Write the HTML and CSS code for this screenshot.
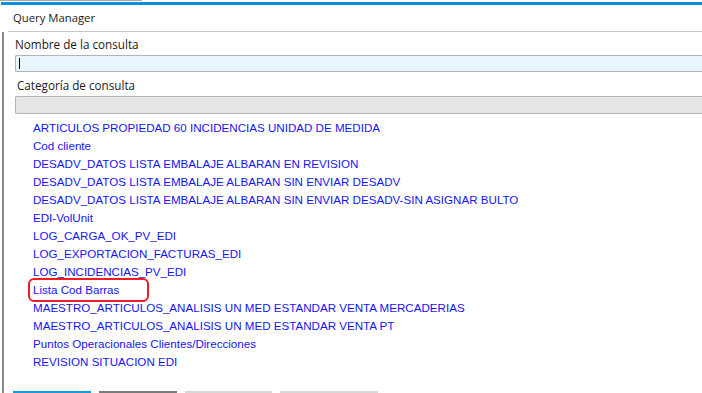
FILE: index.html
```html
<!DOCTYPE html>
<html lang="es">
<head>
  <meta charset="UTF-8" />
  <title>Query Manager</title>
  <link rel="stylesheet" href="styles.css">
</head>
<body>
  <div class="window">
    <div class="strip"></div>
    <div class="accent"></div>
    <header class="titlebar">Query Manager</header>

    <main class="content">
      <label class="label">Nombre de la consulta</label>
      <div class="field name"><span class="caret"></span></div>

      <label class="label cat">Categoría de consulta</label>
      <div class="field category"></div>

      <ul class="queries">
        <li>ARTICULOS PROPIEDAD 60 INCIDENCIAS UNIDAD DE MEDIDA</li>
        <li>Cod cliente</li>
        <li>DESADV_DATOS LISTA EMBALAJE ALBARAN EN REVISION</li>
        <li>DESADV_DATOS LISTA EMBALAJE ALBARAN SIN ENVIAR DESADV</li>
        <li>DESADV_DATOS LISTA EMBALAJE ALBARAN SIN ENVIAR DESADV-SIN ASIGNAR BULTO</li>
        <li>EDI-VolUnit</li>
        <li>LOG_CARGA_OK_PV_EDI</li>
        <li>LOG_EXPORTACION_FACTURAS_EDI</li>
        <li>LOG_INCIDENCIAS_PV_EDI</li>
        <li class="marked">Lista Cod Barras</li>
        <li>MAESTRO_ARTICULOS_ANALISIS UN MED ESTANDAR VENTA MERCADERIAS</li>
        <li>MAESTRO_ARTICULOS_ANALISIS UN MED ESTANDAR VENTA PT</li>
        <li>Puntos Operacionales Clientes/Direcciones</li>
        <li>REVISION SITUACION EDI</li>
      </ul>

      <div class="buttons">
        <span class="btn primary"></span>
        <span class="btn dark"></span>
        <span class="btn light wide"></span>
        <span class="btn light"></span>
      </div>
    </main>
  </div>
</body>
</html>
```

FILE: styles.css
```css
body {
  margin: 0;
  background: #fff;
  font-family: "Liberation Sans", Arial, sans-serif;
}

.window {
  width: 702px;
  height: 393px;
  overflow: hidden;
  display: flex;
  flex-direction: column;
}

.strip {
  height: 1px;
  background: #a8a8a8;
  margin-right: 560px;
}

.accent {
  height: 3px;
  margin-top: 1px;
  margin-left: 1px;
  background: #0a8fdf;
}

.titlebar {
  height: 26px;
  line-height: 25px;
  padding-left: 13px;
  font-family: "Open Sans", sans-serif;
  font-size: 11.3px;
  color: #1a1a1a;
  border-bottom: 1px solid #c8c8c8;
  margin-left: 8px;
  text-indent: -8px;
}

.content {
  flex: 1;
  border-left: 2px solid #8a8a8a;
  margin-left: 2px;
  padding-left: 11px;
  display: flex;
  flex-direction: column;
}

.label {
  font-family: "Open Sans", sans-serif;
  font-size: 11.7px;
  color: #1a1a1a;
  height: 22px;
  line-height: 22px;
  margin-top: 1px;
}

.label.cat {
  margin-top: 2px;
  padding-left: 2px;
}

.field {
  height: 15px;
  border-top: 1px solid #b4b4b4;
  border-bottom: 1px solid #b4b4b4;
  border-left: 1px solid #b4b4b4;
  border-radius: 2px 0 0 2px;
  position: relative;
}

.field.name {
  background: #e9f5fd;
}

.field.category {
  height: 16px;
  background: #e5e5e5;
}

.caret {
  position: absolute;
  left: 3px;
  top: 2px;
  width: 1px;
  height: 11px;
  background: #000;
}

.queries {
  list-style: none;
  margin: 5px 0 0;
  padding: 0 0 0 18px;
  font-size: 11.6px;
  color: #1414f5;
}

.queries li {
  height: 18px;
  line-height: 18px;
  white-space: nowrap;
}

.queries li.marked {
  position: relative;
}

.queries li.marked::after {
  content: "";
  position: absolute;
  left: -5px;
  top: -3px;
  width: 117px;
  height: 20px;
  border: 2px solid #ee1c24;
  border-radius: 6px;
}

.buttons {
  display: flex;
  gap: 8px;
  margin-top: auto;
  margin-left: -2px;
  height: 2px;
}

.btn {
  width: 78px;
  height: 2px;
}

.btn.primary { background: #1a9ad6; }
.btn.dark { background: #7a7a7a; }
.btn.light { background: #d8d8d8; width: 98px; }
.btn.light.wide { width: 87px; }
```
